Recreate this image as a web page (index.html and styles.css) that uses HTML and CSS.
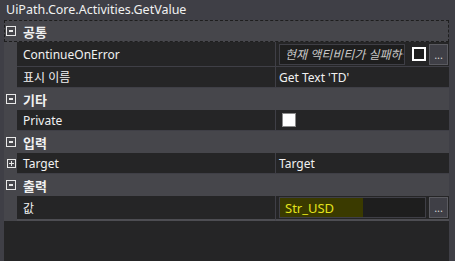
FILE: index.html
```html
<!DOCTYPE html>
<html lang="ko">
<head>
    <meta charset="UTF-8">
    <title>Properties</title>
    <link rel="stylesheet" href="styles.css">
</head>
<body>
    <div class="panel">
        <div class="title">UiPath.Core.Activities.GetValue</div>

        <div class="grid">
            <!-- 공통 -->
            <div class="cat focused"><span class="toggle"></span>공통</div>
            <div class="prop tall">
                <div class="gutter"></div>
                <div class="name">ContinueOnError</div>
                <div class="value">
                    <div class="textbox hint">현재 액티비티가 실패하면 계속합니다</div>
                    <span class="check dark"></span>
                    <span class="dots">...</span>
                </div>
            </div>
            <div class="prop">
                <div class="gutter"></div>
                <div class="name">표시 이름</div>
                <div class="value text">Get Text 'TD'</div>
            </div>

            <!-- 기타 -->
            <div class="cat"><span class="toggle"></span>기타</div>
            <div class="prop">
                <div class="gutter"></div>
                <div class="name">Private</div>
                <div class="value"><span class="check light"></span></div>
            </div>

            <!-- 입력 -->
            <div class="cat"><span class="toggle"></span>입력</div>
            <div class="prop">
                <div class="gutter"><span class="toggle plus"></span></div>
                <div class="name">Target</div>
                <div class="value text">Target</div>
            </div>

            <!-- 출력 -->
            <div class="cat"><span class="toggle"></span>출력</div>
            <div class="prop tall last">
                <div class="gutter"></div>
                <div class="name">값</div>
                <div class="value">
                    <div class="textbox var"><span class="mark">Str_USD</span></div>
                    <span class="dots">...</span>
                </div>
            </div>
        </div>

        <div class="empty"></div>
    </div>
</body>
</html>
```

FILE: styles.css
```css
body {
    margin: 0;
    background-color: #3f3f46;
    font-family: "Noto Sans", "Noto Sans CJK KR", sans-serif;
    color: #f1f1f1;
    overflow: hidden;
}
.panel {
    width: 455px;
    height: 261px;
    display: flex;
    flex-direction: column;
}
.title {
    height: 20px;
    line-height: 19px;
    padding-left: 6px;
    font-size: 12.5px;
    color: #f1f1f1;
}
.grid {
    margin-left: 4px;
    width: 445px;
    background-color: #46464b;
}
.cat {
    height: 22px;
    display: flex;
    align-items: center;
    font-size: 13px;
    font-weight: bold;
    box-sizing: border-box;
    border: 1px solid transparent;
}
.cat.focused {
    border: 1px dashed #1e1e1e;
}
.toggle {
    width: 10px;
    height: 10px;
    box-sizing: border-box;
    border: 1px solid #e8e8e8;
    margin: 0 7px 0 1px;
    position: relative;
    flex-shrink: 0;
}
.toggle::before {
    content: "";
    position: absolute;
    left: 2px;
    top: 3px;
    width: 4px;
    height: 2px;
    background-color: #e8e8e8;
}
.toggle.plus {
    width: 9px;
    height: 9px;
    margin: 0 0 0 3px;
}
.toggle.plus::before {
    left: 1px;
    top: 3px;
    width: 5px;
    height: 1px;
}
.toggle.plus::after {
    content: "";
    position: absolute;
    left: 3px;
    top: 1px;
    width: 1px;
    height: 5px;
    background-color: #e8e8e8;
}
.prop {
    height: 21px;
    display: flex;
    align-items: stretch;
    font-size: 12px;
}
.prop.tall {
    height: 25px;
}
.gutter {
    width: 13px;
    flex-shrink: 0;
    display: flex;
    align-items: center;
}
.name {
    width: 259px;
    box-sizing: border-box;
    padding-left: 6px;
    background-color: #252526;
    border-bottom: 1px solid #3f3f46;
    border-right: 1px solid #3f3f46;
    display: flex;
    align-items: center;
    white-space: nowrap;
}
.value {
    flex: 1;
    background-color: #252526;
    border-bottom: 1px solid #3f3f46;
    display: flex;
    align-items: center;
    padding-left: 3px;
    gap: 3px;
    min-width: 0;
}
.prop.last .name,
.prop.last .value {
    border-bottom: 2px solid #4d4d52;
}
.textbox {
    height: 21px;
    line-height: 20px;
    box-sizing: border-box;
    background-color: #1e1e1e;
    border: 1px solid #3f3f46;
    padding-left: 5px;
    overflow: hidden;
    white-space: nowrap;
}
.textbox.hint {
    width: 127px;
    font-style: italic;
    color: #c8c8c8;
}
.textbox.var {
    width: 149px;
    padding-left: 0;
    color: #e4e41c;
    font-size: 13px;
}
.mark {
    display: inline-block;
    width: 83px;
    padding-left: 5px;
    box-sizing: border-box;
    background-color: #3a3a00;
    height: 20px;
}
.check {
    width: 14px;
    height: 14px;
    box-sizing: border-box;
    flex-shrink: 0;
}
.check.dark {
    border: 2px solid #ffffff;
    background-color: #1e1e1e;
    margin-left: 4px;
}
.check.light {
    border: 1px solid #8a8a8a;
    background-color: #ffffff;
    margin-left: 3px;
}
.dots {
    width: 19px;
    height: 21px;
    box-sizing: border-box;
    background-color: #3f3f46;
    border: 1px solid #5a5a60;
    font-size: 11px;
    line-height: 20px;
    text-align: center;
    color: #d0d0d0;
    margin-left: auto;
    margin-right: 1px;
}
.empty {
    flex: 1;
    margin-left: 4px;
    width: 445px;
    background-color: #252526;
}
```
